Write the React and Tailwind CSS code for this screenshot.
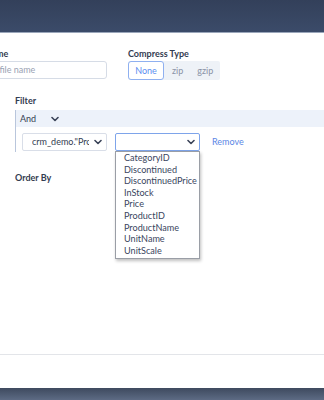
import React from 'react';

const Chevron = ({ className = '' }) => (
  <svg width="8" height="6" viewBox="0 0 8 6" className={className}>
    <polyline points="1,1.5 4,4.5 7,1.5" fill="none" stroke="#3a4358" strokeWidth="1.6" strokeLinecap="round" strokeLinejoin="round" />
  </svg>
);

const fields = [
  'CategoryID',
  'Discontinued',
  'DiscontinuedPrice',
  'InStock',
  'Price',
  'ProductID',
  'ProductName',
  'UnitName',
  'UnitScale',
];

export default function App() {
  return (
    <div className="w-[324px] h-[400px] overflow-hidden flex flex-col bg-white text-[9px] text-[#333c50]" style={{ fontFamily: 'Lato, "Open Sans", sans-serif' }}>
      {/* top bar */}
      <div className="h-[33px] shrink-0 bg-gradient-to-b from-[#33405a] to-[#3b4b69] border-b border-[#9aa6ba]" />

      <div className="flex-1 flex flex-col">
        <div className="h-[321px] flex flex-col">
          {/* export fields */}
          <div className="flex gap-[21px] pt-[15px] -ml-[32px]">
            <div className="w-[139px] flex flex-col gap-[2px]">
              <div className="h-[11px] leading-[11px] font-bold">File Name</div>
              <div className="h-[18px] border border-[#d6dce6] rounded-[3px] flex items-center pl-[7px] text-[#9aa2b3]">Enter file name</div>
            </div>
            <div className="flex flex-col gap-[2px]">
              <div className="h-[11px] leading-[11px] font-bold">Compress Type</div>
              <div className="h-[19px] w-[92px] bg-[#eef2f7] rounded-[2px] flex items-center">
                <div className="h-[19px] w-[36px] bg-white border border-[#8fb0f0] rounded-[3px] flex items-center justify-center text-[#5b8def]">None</div>
                <div className="ml-[8px] text-[#8a93a6]">zip</div>
                <div className="ml-[14px] text-[#8a93a6]">gzip</div>
              </div>
            </div>
          </div>

          {/* filter */}
          <div className="pl-[15px] mt-[15px]">
            <div className="h-[11px] leading-[11px] font-bold">Filter</div>
            <div className="mt-[4px] border-l border-[#b9c6dc]">
              <div className="h-[17px] bg-[#edf2fa] flex items-center pl-[4px]">
                <span>And</span>
                <Chevron className="ml-[15px]" />
              </div>
              <div className="flex items-center pt-[6px] pb-[1px] pl-[6px]">
                <div className="w-[85px] h-[18px] border border-[#d9dee8] rounded-[2px] flex items-center pl-[9px] pr-[4px]">
                  <span className="w-[57px] overflow-hidden whitespace-nowrap">crm_demo."Products"</span>
                  <Chevron className="ml-auto" />
                </div>
                <div className="relative ml-[8px]">
                  <div className="w-[85px] h-[18px] border border-[#7ea4ea] rounded-[2px] flex items-center pr-[4px]">
                    <Chevron className="ml-auto" />
                  </div>
                  <div className="absolute left-0 top-[18px] w-[85px] bg-white border border-[#9a9ea6] shadow-[1px_2px_3px_rgba(0,0,0,0.25)] pb-[2px] pl-[8px] z-10">
                    {fields.map(f => (
                      <div key={f} className="h-[11.6px] leading-[11.6px] text-[9.1px] text-[#3a4560]">{f}</div>
                    ))}
                  </div>
                </div>
                <div className="ml-[12px] text-[#5b86e5]">Remove</div>
              </div>
            </div>
            <div className="mt-[20px] h-[11px] leading-[11px] font-bold">Order By</div>
          </div>
        </div>
        <div className="h-[34px] border-t border-[#e3e5e9]" />
      </div>

      {/* bottom bar */}
      <div className="h-[12px] shrink-0 bg-gradient-to-b from-[#3e4a5f] to-[#5d6b84]" />
    </div>
  );
}
